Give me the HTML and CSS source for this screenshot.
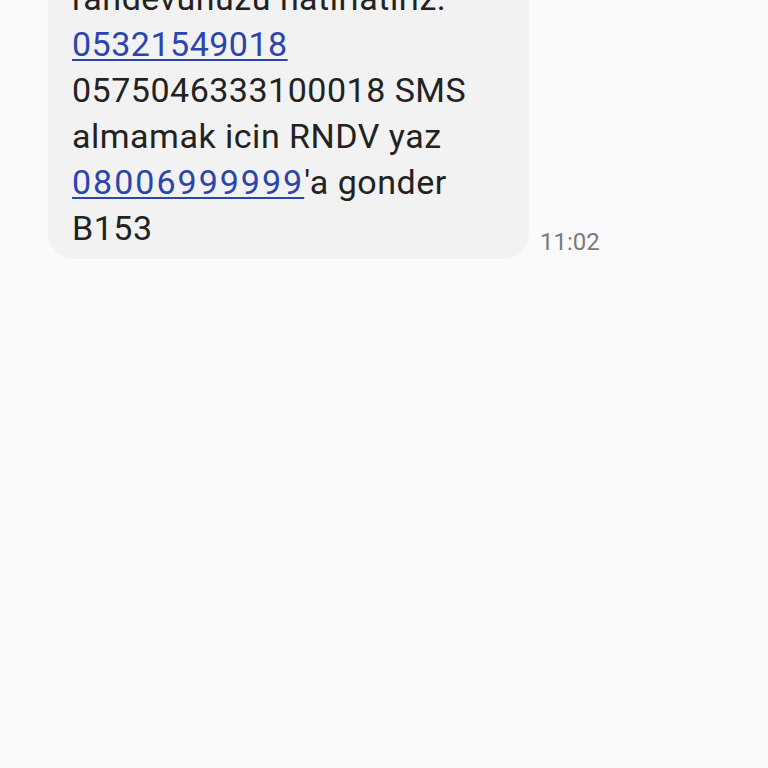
FILE: index.html
```html
<!DOCTYPE html>
<html lang="tr">
<head>
<meta charset="utf-8">
<link rel="stylesheet" href="styles.css">
</head>
<body>
<div class="thread">
  <div class="row">
    <div class="bubble">
      <p class="msg">randevunuzu hatirlatiriz.<br><a href="#" class="link">05321549018</a><br>0575046333100018 SMS<br>almamak icin RNDV yaz<br><a href="#" class="link wide">08006999999</a>'a gonder<br>B153</p>
    </div>
    <span class="time">11:02</span>
  </div>
</div>
</body>
</html>
```

FILE: styles.css
```css
html, body {
  margin: 0;
  padding: 0;
  background: #fafafc;
  height: 768px;
  overflow: hidden;
}
.thread {
  padding: 0 0 0 48px;
  margin-top: -45px;
  font-family: Roboto, "Noto Sans", sans-serif;
}
.row {
  display: flex;
  align-items: flex-end;
  gap: 11px;
}
.bubble {
  width: 481px;
  box-sizing: border-box;
  background: #f2f2f2;
  border-radius: 26px;
  padding: 20px 24px 8px 24px;
}
.msg {
  margin: 0;
  font-size: 34px;
  line-height: 46px;
  letter-spacing: 0.5px;
  color: #222222;
}
.link {
  color: #2b45ad;
  text-decoration: underline;
  text-decoration-thickness: 2px;
  text-underline-offset: 3px;
}
.wide {
  letter-spacing: 2px;
}
.time {
  font-size: 24px;
  color: #7a7a7a;
  line-height: 28px;
  margin-bottom: 3px;
}
```
